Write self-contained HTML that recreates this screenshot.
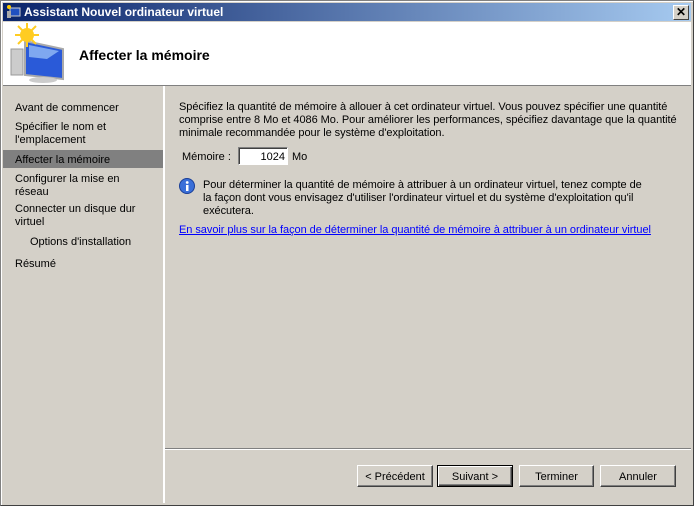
<!DOCTYPE html>
<html><head><style>
body{margin:0;width:694px;height:506px;overflow:hidden;background:#d4d0c8;font-family:"Liberation Sans",sans-serif;font-size:11px;color:#000;position:relative}
.abs{position:absolute}
.win{left:0;top:0;width:692px;height:504px;border:1px solid #808080;border-right-color:#404040;border-bottom-color:#404040;box-shadow:inset 1px 1px 0 #fff}
.title{left:3px;top:3px;width:688px;height:18px;background:linear-gradient(to right,#0a246a,#a6caf0)}
.title span{position:absolute;left:21px;top:2px;color:#fff;font-weight:bold;font-size:12px}
.close{left:673px;top:5px;width:14px;height:13px;background:#d4d0c8;border:1px solid;border-color:#fff #404040 #404040 #fff;font-weight:bold;font-size:12px;line-height:13px;text-align:center}
.head{left:3px;top:22px;width:688px;height:63px;background:#fff;border-bottom:1px solid #808080}
.left{left:3px;top:86px;width:160px;height:417px;background:#d4d0c8}
.vsep{left:163px;top:86px;width:2px;height:417px;background:#fff}
.nav{left:15px}
.sel{left:3px;top:150px;width:160px;height:18px;background:#808080}
.btn{top:465px;height:22px;background:#d4d0c8;border:1px solid;border-color:#fff #404040 #404040 #fff;box-shadow:inset -1px -1px 0 #808080;text-align:center;line-height:22px;box-sizing:border-box}
.r{letter-spacing:-0.05px}
a{color:#0000ff;text-decoration:underline}
</style></head><body>
<div class="abs win"></div>
<div class="abs title"><svg class="abs" style="left:3px;top:2px" width="15" height="14"><rect x="4" y="3" width="10" height="8" fill="#2050c0" stroke="#ccc"/><rect x="1" y="6" width="4" height="7" fill="#aaa"/><circle cx="3" cy="2" r="2" fill="#fc0"/></svg><span>Assistant Nouvel ordinateur virtuel</span></div>
<div class="abs close">✕</div>
<div class="abs head">
<svg class="abs" style="left:4px;top:1px" width="62" height="60">
<rect x="4" y="26" width="12" height="26" fill="#ccc" stroke="#999"/>
<polygon points="18,18 56,26 56,56 18,52" fill="#2a5ad8" stroke="#aaa" stroke-width="2"/>
<polygon points="22,22 52,28 40,36 22,34" fill="#7fa8f0"/>
<ellipse cx="36" cy="57" rx="14" ry="3" fill="#ccc"/>
<circle cx="20" cy="12" r="7" fill="#fc2"/><path d="M20 0v24M8 12h24M11 3l18 18M29 3l-18 18" stroke="#fc2" stroke-width="2"/>
</svg>
<div class="abs" style="left:76px;top:25px;font-size:14px;font-weight:bold">Affecter la mémoire</div>
</div>
<div class="abs left"></div>
<div class="abs sel"></div>
<div class="abs vsep"></div>
<div class="abs nav" style="top:102px">Avant de commencer</div>
<div class="abs nav" style="top:121px;line-height:13px">Spécifier le nom et<br>l'emplacement</div>
<div class="abs nav" style="top:154px">Affecter la mémoire</div>
<div class="abs nav" style="top:173px;line-height:13px">Configurer la mise en<br>réseau</div>
<div class="abs nav" style="top:203px;line-height:13px">Connecter un disque dur<br>virtuel</div>
<div class="abs" style="left:30px;top:236px">Options d'installation</div>
<div class="abs nav" style="top:258px">Résumé</div>
<div class="abs r" style="left:179px;top:101px;line-height:13px;width:510px">Spécifiez la quantité de mémoire à allouer à cet ordinateur virtuel. Vous pouvez spécifier une quantité<br>comprise entre 8 Mo et 4086 Mo. Pour améliorer les performances, spécifiez davantage que la quantité<br>minimale recommandée pour le système d'exploitation.</div>
<div class="abs" style="left:182px;top:151px">Mémoire :</div>
<div class="abs" style="left:238px;top:147px;width:46px;height:16px;background:#fff;border:1px solid;border-color:#808080 #fff #fff #808080;box-shadow:inset 1px 1px 0 #404040;text-align:right;line-height:18px;padding-right:2px">1024</div>
<div class="abs" style="left:292px;top:151px">Mo</div>
<svg class="abs" style="left:179px;top:178px" width="16" height="16"><circle cx="8" cy="8" r="7.5" fill="#3a6fd8" stroke="#1a3f98"/><rect x="7" y="7" width="2.5" height="6" fill="#fff"/><circle cx="8.2" cy="4.5" r="1.4" fill="#fff"/></svg>
<div class="abs r" style="left:203px;top:179px;line-height:13px">Pour déterminer la quantité de mémoire à attribuer à un ordinateur virtuel, tenez compte de<br>la façon dont vous envisagez d'utiliser l'ordinateur virtuel et du système d'exploitation qu'il<br>exécutera.</div>
<div class="abs r" style="left:179px;top:224px"><a>En savoir plus sur la façon de déterminer la quantité de mémoire à attribuer à un ordinateur virtuel</a></div>
<div class="abs" style="left:165px;top:448px;width:526px;height:1px;background:#808080"></div>
<div class="abs" style="left:165px;top:449px;width:526px;height:1px;background:#fff"></div>
<div class="abs btn" style="left:357px;width:76px">&lt; Précédent</div>
<div class="abs btn" style="left:437px;width:76px;border:1px solid #000;box-shadow:inset 1px 1px 0 #fff,inset -1px -1px 0 #404040,inset -2px -2px 0 #808080">Suivant &gt;</div>
<div class="abs btn" style="left:519px;width:75px">Terminer</div>
<div class="abs btn" style="left:600px;width:76px">Annuler</div>
</body></html>
